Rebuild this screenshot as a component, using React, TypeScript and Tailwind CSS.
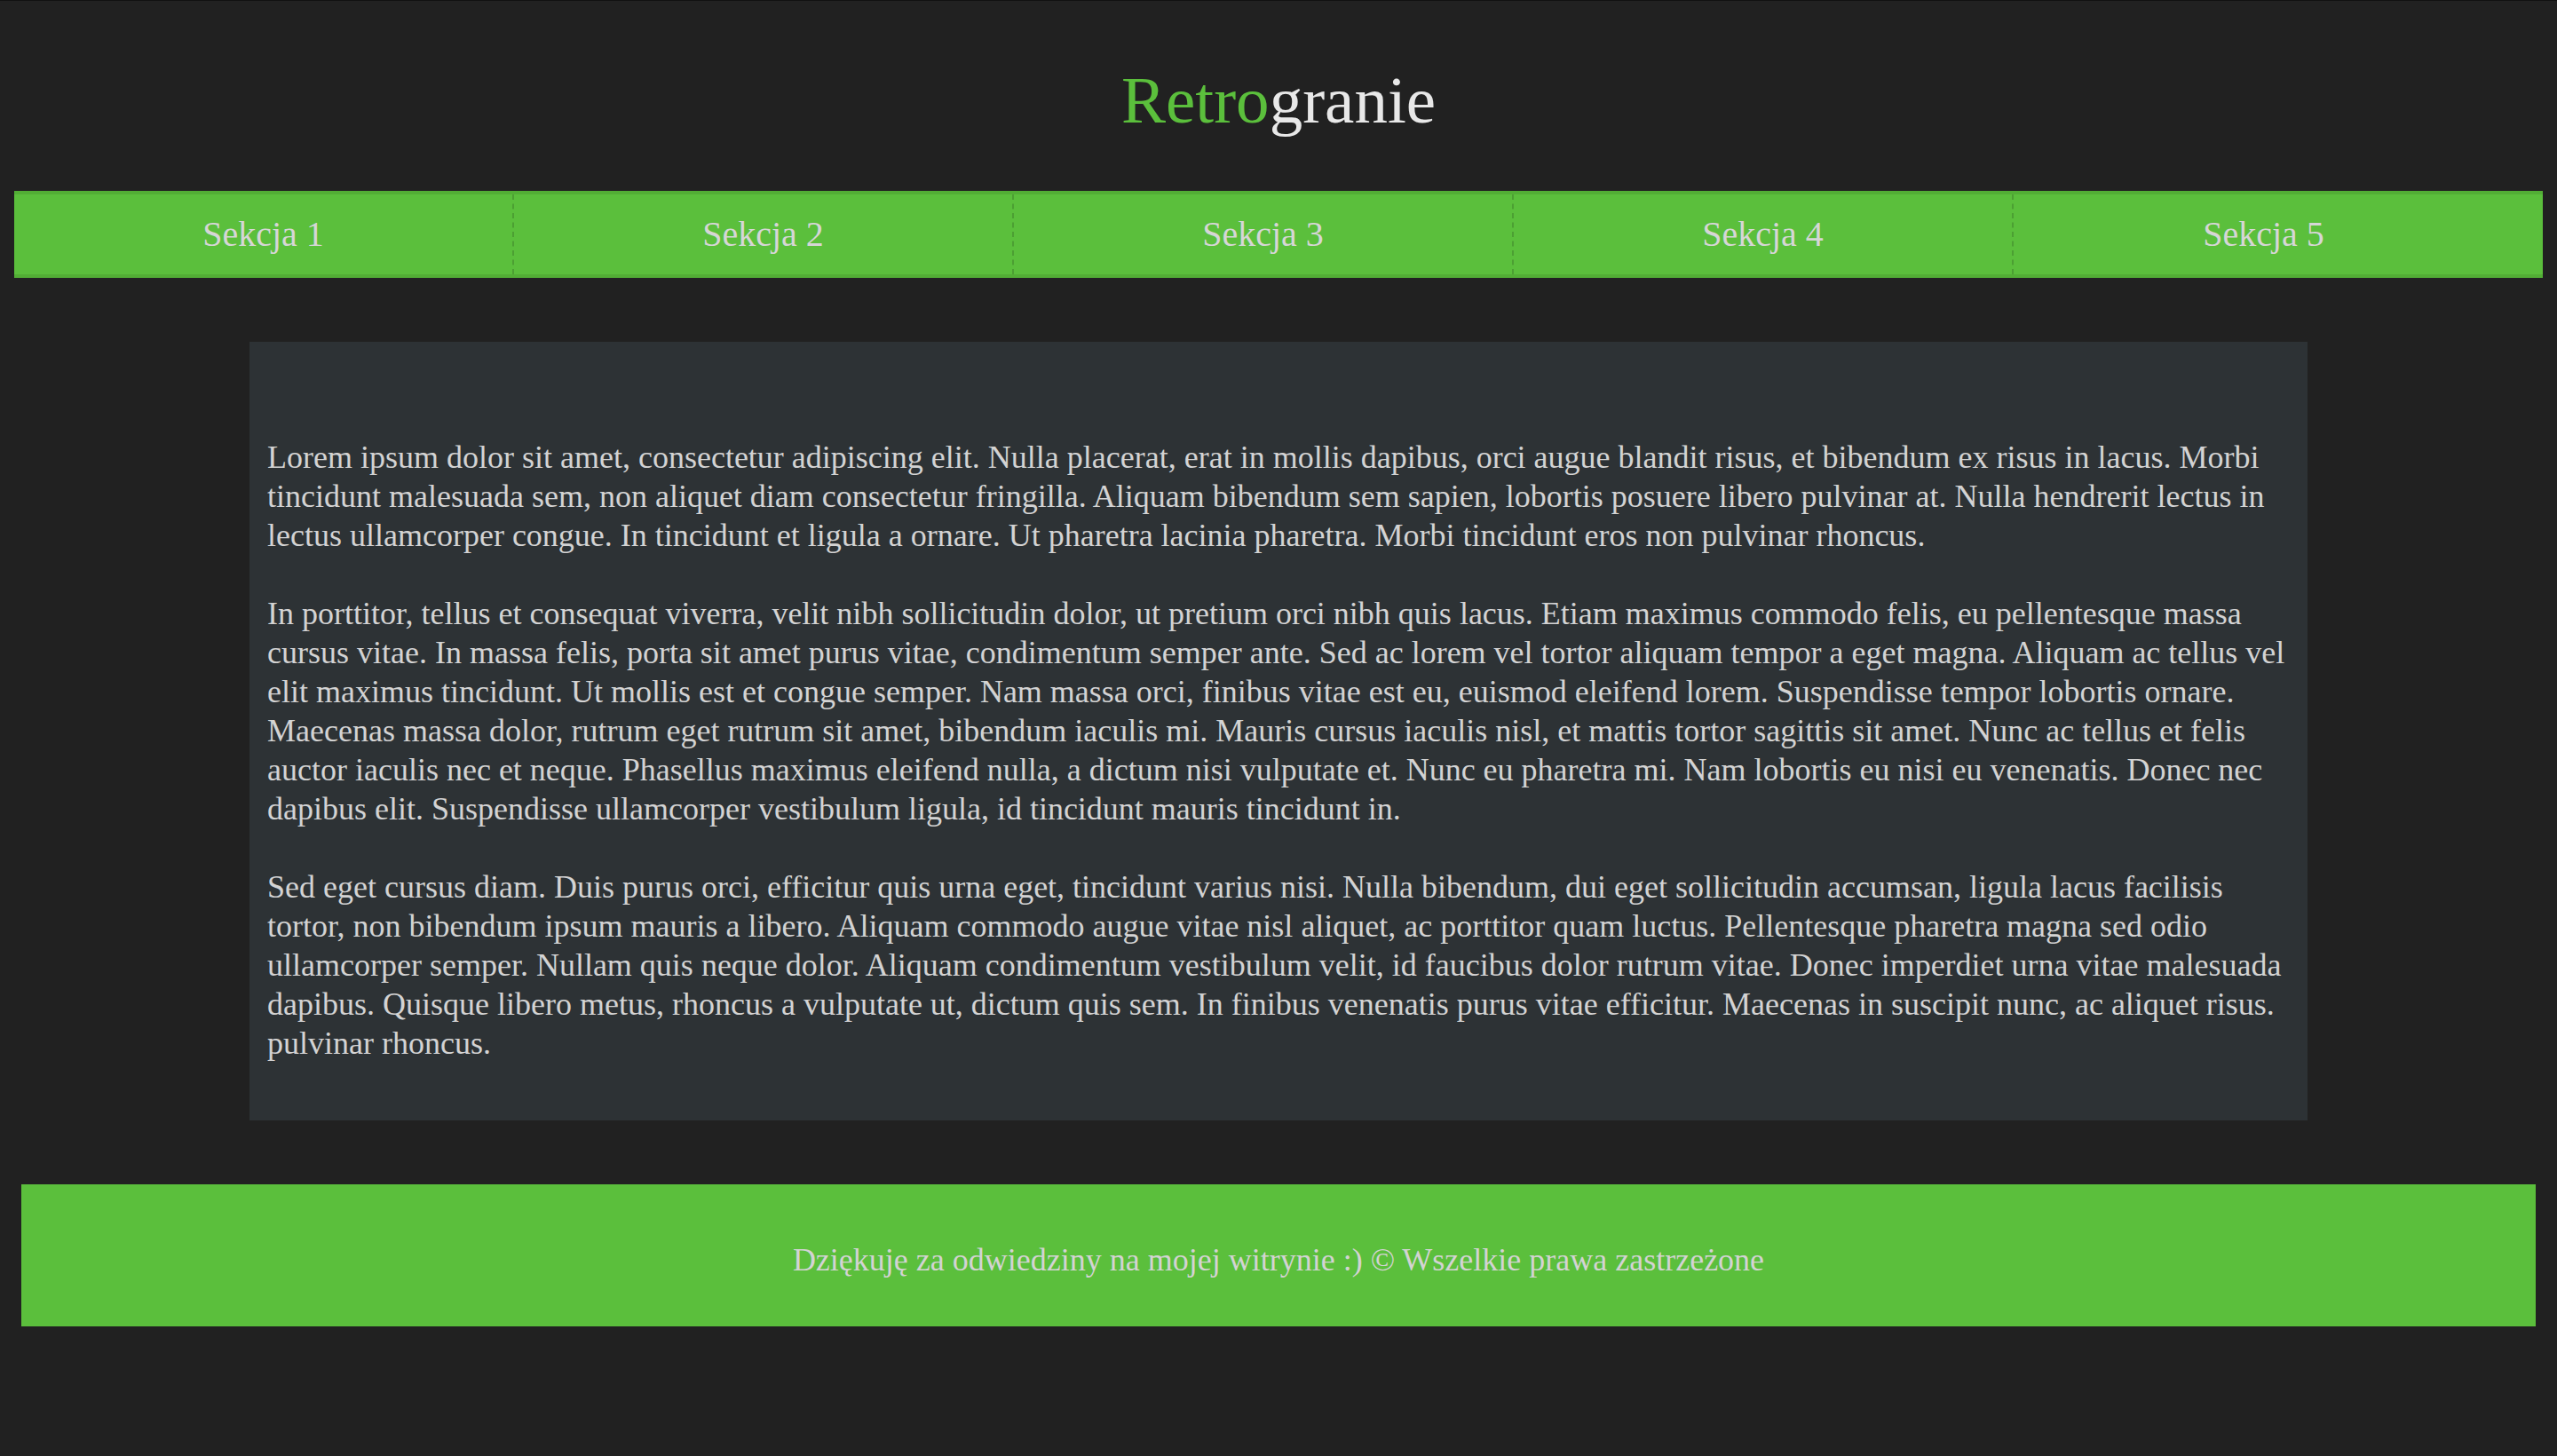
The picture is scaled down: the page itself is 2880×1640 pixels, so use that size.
import React from "react";

const serif = "font-['Liberation_Serif','Times_New_Roman',serif]";

const paragraphs = [
  "Lorem ipsum dolor sit amet, consectetur adipiscing elit. Nulla placerat, erat in mollis dapibus, orci augue blandit risus, et bibendum ex risus in lacus. Morbi tincidunt malesuada sem, non aliquet diam consectetur fringilla. Aliquam bibendum sem sapien, lobortis posuere libero pulvinar at. Nulla hendrerit lectus in lectus ullamcorper congue. In tincidunt et ligula a ornare. Ut pharetra lacinia pharetra. Morbi tincidunt eros non pulvinar rhoncus.",
  "In porttitor, tellus et consequat viverra, velit nibh sollicitudin dolor, ut pretium orci nibh quis lacus. Etiam maximus commodo felis, eu pellentesque massa cursus vitae. In massa felis, porta sit amet purus vitae, condimentum semper ante. Sed ac lorem vel tortor aliquam tempor a eget magna. Aliquam ac tellus vel elit maximus tincidunt. Ut mollis est et congue semper. Nam massa orci, finibus vitae est eu, euismod eleifend lorem. Suspendisse tempor lobortis ornare. Maecenas massa dolor, rutrum eget rutrum sit amet, bibendum iaculis mi. Mauris cursus iaculis nisl, et mattis tortor sagittis sit amet. Nunc ac tellus et felis auctor iaculis nec et neque. Phasellus maximus eleifend nulla, a dictum nisi vulputate et. Nunc eu pharetra mi. Nam lobortis eu nisi eu venenatis. Donec nec dapibus elit. Suspendisse ullamcorper vestibulum ligula, id tincidunt mauris tincidunt in.",
  "Sed eget cursus diam. Duis purus orci, efficitur quis urna eget, tincidunt varius nisi. Nulla bibendum, dui eget sollicitudin accumsan, ligula lacus facilisis tortor, non bibendum ipsum mauris a libero. Aliquam commodo augue vitae nisl aliquet, ac porttitor quam luctus. Pellentesque pharetra magna sed odio ullamcorper semper. Nullam quis neque dolor. Aliquam condimentum vestibulum velit, id faucibus dolor rutrum vitae. Donec imperdiet urna vitae malesuada dapibus. Quisque libero metus, rhoncus a vulputate ut, dictum quis sem. In finibus venenatis purus vitae efficitur. Maecenas in suscipit nunc, ac aliquet risus. pulvinar rhoncus.",
];

export default function App() {
  return (
    <div className={`min-h-[1640px] w-full bg-[#212121] border-t border-[#111111] ${serif}`}>
      <header className="pt-[72px] text-center">
        <h1 className="text-[75px] leading-[80px] font-normal">
          <span className="text-[#5bbf3c]">Retro</span>
          <span className="text-[#e8e8e8]">granie</span>
        </h1>
      </header>

      <nav className="mx-[16px] mt-[62px] h-[98px] flex bg-[#5bbf3c] border-y-4 border-[#52ae35]">
        {[1, 2, 3, 4, 5].map((n) => (
          <div
            key={n}
            className={`w-[563px] h-full flex items-center justify-center text-[40px] leading-[46px] text-[#d6d6d6] ${
              n < 5 ? "border-r-2 border-dashed border-[#4c9f33]" : ""
            }`}
          >
            Sekcja {n}
          </div>
        ))}
      </nav>

      <main className="mt-[72px] mx-auto w-[2318px] bg-[#2d3235] px-[20px] pt-[108px] pb-[65px] flex flex-col gap-[44px]">
        {paragraphs.map((p, i) => (
          <p key={i} className="text-[36px] leading-[44px] text-[#d3d3d3]">
            {p}
          </p>
        ))}
      </main>

      <footer className="mt-[72px] mx-[24px] h-[160px] bg-[#5bbf3c] pt-[63px] text-center">
        <p className="text-[36px] leading-[44px] text-[#d3d3d3]">
          Dziękuję za odwiedziny na mojej witrynie :) © Wszelkie prawa zastrzeżone
        </p>
      </footer>
    </div>
  );
}
